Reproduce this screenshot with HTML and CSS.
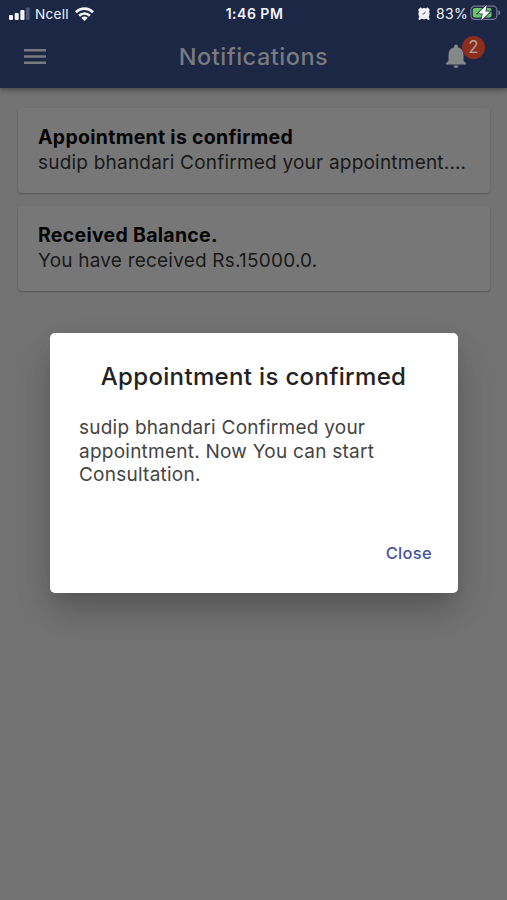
FILE: index.html
```html
<!DOCTYPE html>
<html lang="en">
<head>
<meta charset="utf-8">
<title>Notifications</title>
<link rel="stylesheet" href="styles.css">
</head>
<body>
<header class="top">
  <div class="status">
    <div class="carrier">
      <svg class="signal" width="21" height="14" viewBox="0 0 21 14"><g fill="#f3f5fb"><rect x="0" y="8" width="4" height="5" rx="1"/><rect x="5.7" y="6" width="4" height="7" rx="1"/><rect x="11.3" y="3" width="4.2" height="10" rx="1"/></g><rect x="17" y="0.5" width="3.6" height="12.5" rx="1" fill="#4f5874"/></svg>
      <span class="name">Ncell</span>
      <svg class="wifi" width="19" height="14" viewBox="0 0 19 14"><g fill="none" stroke="#f3f5fb" stroke-width="2.7"><path d="M1 5.2a12.1 12.1 0 0 1 17 0"/><path d="M4.1 8.7a7.7 7.7 0 0 1 10.8 0"/></g><path d="M6.3 10.8a4.5 4.5 0 0 1 6.4 0L9.5 14z" fill="#f3f5fb"/></svg>
    </div>
    <span class="time">1:46 PM</span>
    <div class="power">
      <svg class="alarm" width="12" height="13" viewBox="0 0 12 13"><circle cx="6" cy="6.7" r="5.6" fill="#f3f5fb"/><path d="M1.5 3 2.6 1.7M10.5 3 9.4 1.7M2.4 10.8 1.6 11.8M9.6 10.8l.8 1" stroke="#f3f5fb" stroke-width="2.4" stroke-linecap="round"/><path d="M7.5 4.5 6 7H4.3" fill="none" stroke="#5b6380" stroke-width="1"/></svg>
      <span class="percent">83%</span>
      <svg class="battery" width="31" height="17" viewBox="0 0 31 17"><rect x=".9" y="1.2" width="26" height="13.2" rx="3.8" fill="none" stroke="#747b90" stroke-width="1.2"/><path d="M28.4 5.3v5c2.6-.8 2.6-4.2 0-5z" fill="#747b90"/><rect x="2.8" y="3" width="18.7" height="9.6" rx="2" fill="#65c967"/><path d="M16.8 0 7.8 8.5h5L11.2 15.5l9.2-9h-5z" fill="#fff" stroke="#1c2645" stroke-width="1.6" paint-order="stroke"/></svg>
    </div>
  </div>
  <div class="bar">
    <svg class="menu" width="22" height="15" viewBox="0 0 22 15"><path d="M0 1.25h22M0 7.5h22M0 13.75h22" stroke="#797a7d" stroke-width="2.5"/></svg>
    <h1>Notifications</h1>
    <div class="bell">
      <svg width="20" height="24" viewBox="4 2 16 20" preserveAspectRatio="none"><path fill="#858889" d="M12 22c1.1 0 2-.9 2-2h-4c0 1.1.9 2 2 2zm6-6v-5c0-3.07-1.63-5.64-4.5-6.32V4c0-.83-.67-1.5-1.5-1.5s-1.5.67-1.5 1.5v.68C7.64 5.36 6 7.92 6 11v5l-2 2v1h16v-1l-2-2z"/></svg>
      <span class="badge">2</span>
    </div>
  </div>
</header>
<main class="list">
  <article class="card"><h2>Appointment is confirmed</h2><p>sudip bhandari Confirmed your appointment.…</p></article>
  <article class="card"><h2>Received Balance.</h2><p>You have received Rs.15000.0.</p></article>
</main>
<section class="dialog" role="dialog">
  <h2>Appointment is confirmed</h2>
  <p>sudip bhandari Confirmed your<br>appointment. Now You can start<br>Consultation.</p>
  <button type="button">Close</button>
</section>
</body>
</html>
```

FILE: styles.css
```css
* { box-sizing: border-box; }
body { margin: 0; height: 900px; overflow: hidden; background: #737373; font-family: Inter, "Liberation Sans", sans-serif; position: relative; }
h1, h2, p { margin: 0; font-weight: 400; white-space: nowrap; }
svg { display: block; flex: none; }
.top { height: 88px; background: #1c2645; box-shadow: 0 2px 4px rgba(0,0,0,.28), 0 3px 8px rgba(0,0,0,.1); }
.status { height: 27px; display: grid; grid-template-columns: 1fr auto 1fr; align-items: center; padding: 0 6px 0 9px; color: #f3f5fb; font-size: 13.6px; }
.carrier, .power { display: flex; align-items: center; }
.power { justify-content: flex-end; }
.name { margin: 0 6px 0 5px; letter-spacing: .25px; }
.time { font-weight: 600; font-size: 14px; letter-spacing: .5px; margin-left: -1px; }
.percent { margin: 0 2px 0 6px; font-size: 14px; letter-spacing: .3px; }
.bar { height: 59px; display: grid; grid-template-columns: 1fr auto 1fr; align-items: center; padding: 0 24px; }
.bar h1 { color: #797a7d; font-size: 23.5px; font-weight: 500; letter-spacing: .52px; }
.bell { position: relative; justify-self: end; margin: 0 17.5px 2px 0; }
.badge { position: absolute; left: 16.5px; top: -8px; width: 23px; height: 23px; border-radius: 50%; background: #8c2d1d; color: #b0a09e; font-size: 17px; line-height: 22px; text-align: center; }
.list { padding: 22px 17px 20px 18px; margin-top: -2px; display: grid; gap: 13px; }
.card { height: 85px; padding: 17px 20px; border-radius: 4px; background: #777; box-shadow: 0 1px 2px rgba(0,0,0,.25); color: #191919; font-size: 19px; line-height: 25px; letter-spacing: .21px; }
.card h2 { font-size: 19.5px; line-height: 25px; font-weight: 700; letter-spacing: .28px; color: #050505; }
.dialog { position: absolute; left: 50px; top: 333px; width: 408px; height: 260px; padding: 29px 26px 25px 29px; border-radius: 5px; background: #fff; box-shadow: 0 12px 16px -8px rgba(0,0,0,.12), 0 24px 36px 0 rgba(0,0,0,.13), 0 9px 40px 5px rgba(0,0,0,.07); display: flex; flex-direction: column; }
.dialog h2 { margin-right: 4px; font-size: 24px; line-height: 30px; font-weight: 500; letter-spacing: .34px; color: #222; text-align: center; }
.dialog p { margin-top: 24px; font-size: 19px; line-height: 23.5px; letter-spacing: .24px; color: #444; }
.dialog button { margin-top: auto; align-self: flex-end; border: 0; padding: 0; background: none; font: 500 16.5px/30px Inter, sans-serif; letter-spacing: .3px; color: #46549c; }
```
